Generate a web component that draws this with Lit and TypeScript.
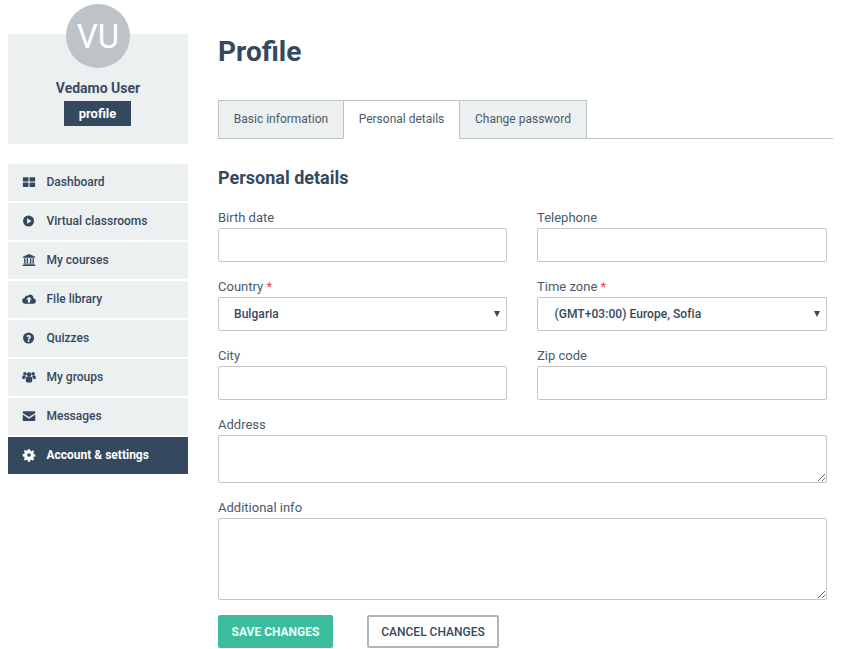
import { LitElement, html, css, svg } from "lit";
import { customElement } from "lit/decorators.js";

const icons: Record<string, unknown> = {
  dashboard: svg`<rect x="1" y="2.500" width="6.400" height="5" rx=".7"/><rect x="8.600" y="2.500" width="6.400" height="5" rx=".7"/><rect x="1" y="8.600" width="6.400" height="5" rx=".7"/><rect x="8.600" y="8.600" width="6.400" height="5" rx=".7"/>`,
  play: svg`<path fill-rule="evenodd" d="M7.500 1.700a6.300 6.300 0 1 0 0 12.600 6.300 6.300 0 0 0 0-12.600zM5.800 4.900 10.900 8l-5.100 3.100z"/>`,
  bank: svg`<path d="M8 1 15 4.300V5.400H1V4.300zM2.400 6.100H4v5.400H2.400zM5.300 6.100h1.600v5.400H5.300zM9.100 6.100h1.600v5.400H9.100zM12 6.100h1.600v5.400H12zM1.800 12h12.400v1H1.800zM.8 13.500h14.400v1.400H.8z"/>`,
  cloud: svg`<path fill-rule="evenodd" d="M13 7.100A3.500 3.500 0 0 0 6.900 4.200 2.700 2.700 0 0 0 3.200 6.700 3.300 3.300 0 0 0 3.900 13.300h8.600A3.100 3.100 0 0 0 13 7.100zM8 5.400l3.200 3.200H9.300V12H6.700V8.600H4.800z"/>`,
  question: svg`<path fill-rule="evenodd" d="M7.500 1.700a6.300 6.300 0 1 0 0 12.600 6.300 6.300 0 0 0 0-12.600zm1 10.600h-2v-1.900h2zm1.700-5.500c0 1-.6 1.600-1.200 2-.4.300-.5.400-.5.900H6.600c0-1 .4-1.500 1-1.900.4-.3.600-.5.600-.8 0-.4-.3-.6-.7-.6-.5 0-.8.300-1.100.7L5 6c.5-.8 1.400-1.400 2.600-1.400 1.400 0 2.600.9 2.600 2.200z"/>`,
  groups: svg`<circle cx="8" cy="5.200" r="2.700"/><circle cx="3.300" cy="4.200" r="2"/><circle cx="12.700" cy="4.200" r="2"/><path d="M4.300 9.400c0-1 .8-1.700 1.700-1.700h4c1 0 1.700.7 1.700 1.700v3c0 1.100-.8 1.800-1.800 1.800H6.100c-1 0-1.800-.7-1.800-1.800z"/><path d="M.3 7.400c0-.6.500-1.200 1.200-1.200h2.400c.1.600.4 1.100.8 1.400-.9.300-1.500 1-1.500 2v.8H1.100c-.5 0-.8-.3-.8-.8zM15.700 7.400c0-.6-.5-1.200-1.200-1.200h-2.400c-.1.600-.4 1.100-.8 1.400.9.300 1.500 1 1.500 2v.8h2.100c.5 0 .8-.3.8-.8z"/>`,
  mail: svg`<path d="M.8 4c0-.8.6-1.400 1.400-1.400h11.600c.8 0 1.400.6 1.400 1.400v.6L8 9.200.8 4.600z"/><path d="M.8 6.300 8 11l7.200-4.700v5.900c0 .8-.6 1.400-1.400 1.400H2.200c-.8 0-1.400-.6-1.400-1.400z"/>`,
  gear: svg`<path fill-rule="evenodd" d="M6.900 1.300h2.200l.4 1.800 1.300.5 1.600-1 1.500 1.500-1 1.600.5 1.300 1.800.4v2.200l-1.800.4-.5 1.300 1 1.600-1.500 1.500-1.600-1-1.300.5-.4 1.800H6.900l-.4-1.800-1.300-.5-1.600 1-1.500-1.500 1-1.600-.5-1.300-1.800-.4V6.900l1.800-.4.500-1.300-1-1.600 1.500-1.500 1.600 1 1.300-.5zM8 5.900a2.100 2.100 0 1 0 0 4.200 2.100 2.100 0 0 0 0-4.200z"/>`,
};

const nav = [
  ["dashboard", "Dashboard"],
  ["play", "Virtual classrooms"],
  ["bank", "My courses"],
  ["cloud", "File library"],
  ["question", "Quizzes"],
  ["groups", "My groups"],
  ["mail", "Messages"],
  ["gear", "Account & settings"],
];

@customElement("app-root")
export class AppRoot extends LitElement {
  static styles = css`
    :host {
      display: block;
      width: 841px;
      height: 649px;
      overflow: hidden;
      background: #fff;
      font-family: Roboto, "Liberation Sans", sans-serif;
      color: #34495e;
      font-size: 13px;
    }
    * { box-sizing: border-box; }
    .page { display: flex; align-items: flex-start; padding-left: 8px; }
    .side { width: 180px; flex: none; padding-top: 4px; }
    .avatar {
      width: 64px; height: 64px; border-radius: 50%;
      background: #bdc3c7; color: #fff;
      display: flex; align-items: center; justify-content: center;
      font-size: 33px; font-weight: 400;
      margin: 0 auto -34px; position: relative;
    }
    .panel {
      background: #ecf0f1; height: 110px;
      display: flex; flex-direction: column; align-items: center;
      padding-top: 45px; margin-bottom: 20px;
    }
    .uname { font-size: 14px; font-weight: 700; line-height: 18px; margin-bottom: 4px; color: #3b4c60; }
    .badge {
      width: 67px; height: 25px; background: #34495e; color: #fff; margin-right: 1px;
      display: flex; align-items: center; justify-content: center;
      font-weight: 700; font-size: 13px; padding-bottom: 1px;
    }
    nav { display: flex; flex-direction: column; gap: 2px; }
    .item {
      height: 37px; background: #ecf0f1; display: flex; align-items: center;
      padding-left: 13.500px; padding-bottom: 2px; font-weight: 500; font-size: 12px; color: #34495e;
    }
    .item svg { width: 14px; height: 14px; fill: currentColor; margin-right: 11px; flex: none; }
    .item.active { background: #34495e; color: #fff; font-weight: 700; }
    main { width: 615px; margin-left: 30px; flex: none; }
    h1 { margin: 0; font-size: 28px; font-weight: 700; line-height: 34px; padding-top: 35px; height: 100px; }
    .tabs { display: flex; border-bottom: 1px solid #bdc3c7; height: 39px; }
    .tab {
      height: 39px; border: 1px solid #bdc3c7; background: #ecf0f1;
      display: flex; align-items: center; justify-content: center;
      font-size: 12px; color: #4a5b6c; margin-right: -1px; padding-bottom: 2px;
    }
    .tab.active { background: #fff; border-bottom-color: #fff; }
    .t1 { width: 126px; } .t2 { width: 117px; } .t3 { width: 128px; }
    h2 { margin: 0; font-size: 18px; font-weight: 700; line-height: 22px; padding-top: 28px; height: 69px; }
    form { display: grid; grid-template-columns: 289px 290px; column-gap: 30px; row-gap: 15px; }
    .wide { grid-column: 1 / 3; }
    label { display: block; font-size: 13px; line-height: 20px; height: 20px; color: #4a5b6c; }
    .req { color: #e74c3c; }
    input, select, textarea {
      display: block; width: 100%; height: 34px; border: 1px solid #c4c6c8; border-radius: 2px;
      background: #fff; outline: none; font: inherit; color: #34495e; margin: 0;
    }
    .sel { position: relative; }
    select { appearance: none; -webkit-appearance: none; font-weight: 500; font-size: 12px; padding: 0 15px; letter-spacing: .06px; }
    .sel.tz select { padding-left: 16.500px; }
    .sel::after {
      content: ""; position: absolute; right: 7px; top: 14px;
      border: 3.200px solid transparent; border-top: 6px solid #34495e; border-bottom: 0;
    }
    textarea { resize: vertical; }
    .addr { height: 48px; }
    .info { height: 82px; }
    .actions { display: flex; gap: 34px; margin-top: 15px; }
    .btn {
      height: 33px; border-radius: 2px; display: flex; align-items: center; justify-content: center;
      font-size: 12px; font-weight: 700; padding: 0; font-family: inherit;
    }
    .save { width: 115px; background: #3cbc9e; color: #eafff8; border: 0; }
    .cancel { width: 132px; background: #fff; color: #34495e; border: 2px solid #aeb6bd; font-weight: 500; }
  `;

  render() {
    return html`
      <div class="page">
        <aside class="side">
          <div class="avatar">VU</div>
          <div class="panel">
            <div class="uname">Vedamo User</div>
            <div class="badge">profile</div>
          </div>
          <nav>
            ${nav.map(
              ([ic, label], i) => html`
                <div class="item ${i === nav.length - 1 ? "active" : ""}">
                  <svg viewBox="0 0 16 16">${icons[ic]}</svg>${label}
                </div>`
            )}
          </nav>
        </aside>
        <main>
          <h1>Profile</h1>
          <div class="tabs">
            <div class="tab t1">Basic information</div>
            <div class="tab t2 active">Personal details</div>
            <div class="tab t3">Change password</div>
          </div>
          <h2>Personal details</h2>
          <form>
            <div><label>Birth date</label><input /></div>
            <div><label>Telephone</label><input /></div>
            <div>
              <label>Country <span class="req">*</span></label>
              <div class="sel"><select><option>Bulgaria</option></select></div>
            </div>
            <div>
              <label>Time zone <span class="req">*</span></label>
              <div class="sel tz"><select><option>(GMT+03:00) Europe, Sofia</option></select></div>
            </div>
            <div><label>City</label><input /></div>
            <div><label>Zip code</label><input /></div>
            <div class="wide"><label>Address</label><textarea class="addr"></textarea></div>
            <div class="wide"><label>Additional info</label><textarea class="info"></textarea></div>
          </form>
          <div class="actions">
            <button class="btn save" type="button">SAVE CHANGES</button>
            <button class="btn cancel" type="button">CANCEL CHANGES</button>
          </div>
        </main>
      </div>
    `;
  }
}
